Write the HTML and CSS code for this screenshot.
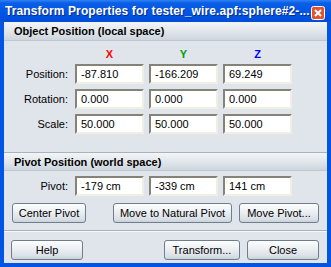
FILE: index.html
```html
<!DOCTYPE html>
<html lang="en">
<head>
  <meta charset="UTF-8" />
  <title>Transform Properties</title>
  <link rel="stylesheet" href="styles.css">
</head>
<body>
  <div class="window">
    <div class="titlebar">
      <span class="title">Transform Properties for tester_wire.apf:sphere#2-...</span>
      <span class="close">
        <svg width="14" height="14" viewBox="0 0 14 14">
          <rect x="0.5" y="0.5" width="13" height="13" rx="2" fill="#e2542d" stroke="#fff"/>
          <path d="M4 4 L10 10 M10 4 L4 10" stroke="#fff" stroke-width="2"/>
        </svg>
      </span>
    </div>
    <div class="client">
      <div class="band">Object Position (local space)</div>
      <div class="axes">
        <span class="axis x">X</span>
        <span class="axis y">Y</span>
        <span class="axis z">Z</span>
      </div>
      <div class="row">
        <label>Position:</label>
        <input type="text" value="-87.810" />
        <input type="text" value="-166.209" />
        <input type="text" value="69.249" />
      </div>
      <div class="row">
        <label>Rotation:</label>
        <input type="text" value="0.000" />
        <input type="text" value="0.000" />
        <input type="text" value="0.000" />
      </div>
      <div class="row">
        <label>Scale:</label>
        <input type="text" value="50.000" />
        <input type="text" value="50.000" />
        <input type="text" value="50.000" />
      </div>

      <div class="band second">Pivot Position (world space)</div>
      <div class="row pivot">
        <label>Pivot:</label>
        <input type="text" value="-179 cm" />
        <input type="text" value="-339 cm" />
        <input type="text" value="141 cm" />
      </div>
      <div class="actions">
        <button class="btn center">Center Pivot</button>
        <button class="btn natural">Move to Natural Pivot</button>
        <button class="btn movepivot">Move Pivot...</button>
      </div>

      <div class="sep"></div>
      <div class="footer">
        <button class="btn help">Help</button>
        <button class="btn transform">Transform...</button>
        <button class="btn closebtn">Close</button>
      </div>
    </div>
  </div>
</body>
</html>
```

FILE: styles.css
```css
body {
  margin: 0;
  padding: 0;
  font-family: Tahoma, 'Liberation Sans', sans-serif;
  font-size: 11px;
  color: #000;
}
.window {
  width: 331px;
  height: 267px;
  box-sizing: border-box;
  padding: 0 4px 4px 4px;
  background-color: #0055e5;
  display: flex;
  flex-direction: column;
}
.titlebar {
  height: 22px;
  margin: 0 -4px;
  padding: 0 6px 0 5px;
  display: flex;
  align-items: center;
  justify-content: space-between;
  background: linear-gradient(#2f83f2 0, #0a5ee6 3px, #0055e4 60%, #004cda 100%);
}
.title {
  color: #fff;
  font-weight: bold;
  font-size: 12px;
  letter-spacing: 0.1px;
  text-shadow: 1px 1px 0 #0a2c8a;
  white-space: nowrap;
  overflow: hidden;
}
.close {
  display: flex;
  flex-shrink: 0;
  margin-top: 3px;
}
.client {
  flex: 1;
  background-color: #dfe5eb;
  display: flex;
  flex-direction: column;
}
.band {
  height: 19px;
  box-sizing: border-box;
  padding-left: 10px;
  line-height: 19px;
  font-weight: bold;
  font-size: 11px;
  background: linear-gradient(#f3f5f7, #e2e7ec 50%, #cdd5dd);
  border-bottom: 1px solid #bfc8d1;
}
.band.second {
  margin-top: 13px;
  border-top: 1px solid #a9b3bd;
}
.axes {
  height: 23px;
  box-sizing: border-box;
  padding: 3px 0 0 71px;
  display: flex;
  gap: 5px;
  align-items: center;
}
.axis {
  width: 69px;
  text-align: center;
  font-weight: bold;
  font-size: 11px;
}
.axis.x { color: #ff0000; }
.axis.y { color: #00a000; }
.axis.z { color: #0000ff; }
.row {
  display: flex;
  align-items: center;
  height: 20px;
  margin-bottom: 5px;
  gap: 5px;
}
.row label {
  width: 64px;
  text-align: right;
  margin-right: 2px;
}
.row input {
  width: 69px;
  height: 20px;
  box-sizing: border-box;
  padding: 0 0 0 4px;
  font-family: inherit;
  font-size: 11px;
  color: #000;
  background: #fff;
  border: 2px solid;
  border-color: #858377 #f1efe4 #f1efe4 #858377;
  outline: none;
}
.row.pivot {
  margin-top: 5px;
  margin-bottom: 7px;
}
.actions {
  display: flex;
  padding: 0 8px;
}
.btn {
  height: 20px;
  padding: 0;
  font-family: inherit;
  font-size: 11px;
  color: #000;
  border: 1px solid #707e8c;
  border-radius: 3px;
  background: linear-gradient(#fcfdfe, #eef1f4 40%, #d9dfe5 85%, #c9d1d9);
}
.btn.center { width: 74px; }
.btn.natural { width: 119px; margin-left: auto; }
.btn.movepivot { width: 80px; margin-left: 7px; }
.sep {
  margin-top: 7px;
  height: 0;
  border-top: 1px solid #a7b0ba;
  border-bottom: 1px solid #f6f8fa;
}
.footer {
  display: flex;
  padding: 8px 8px 0 7px;
}
.btn.help { width: 72px; }
.btn.transform { width: 76px; margin-left: auto; }
.btn.closebtn { width: 72px; margin-left: 7px; }
```
